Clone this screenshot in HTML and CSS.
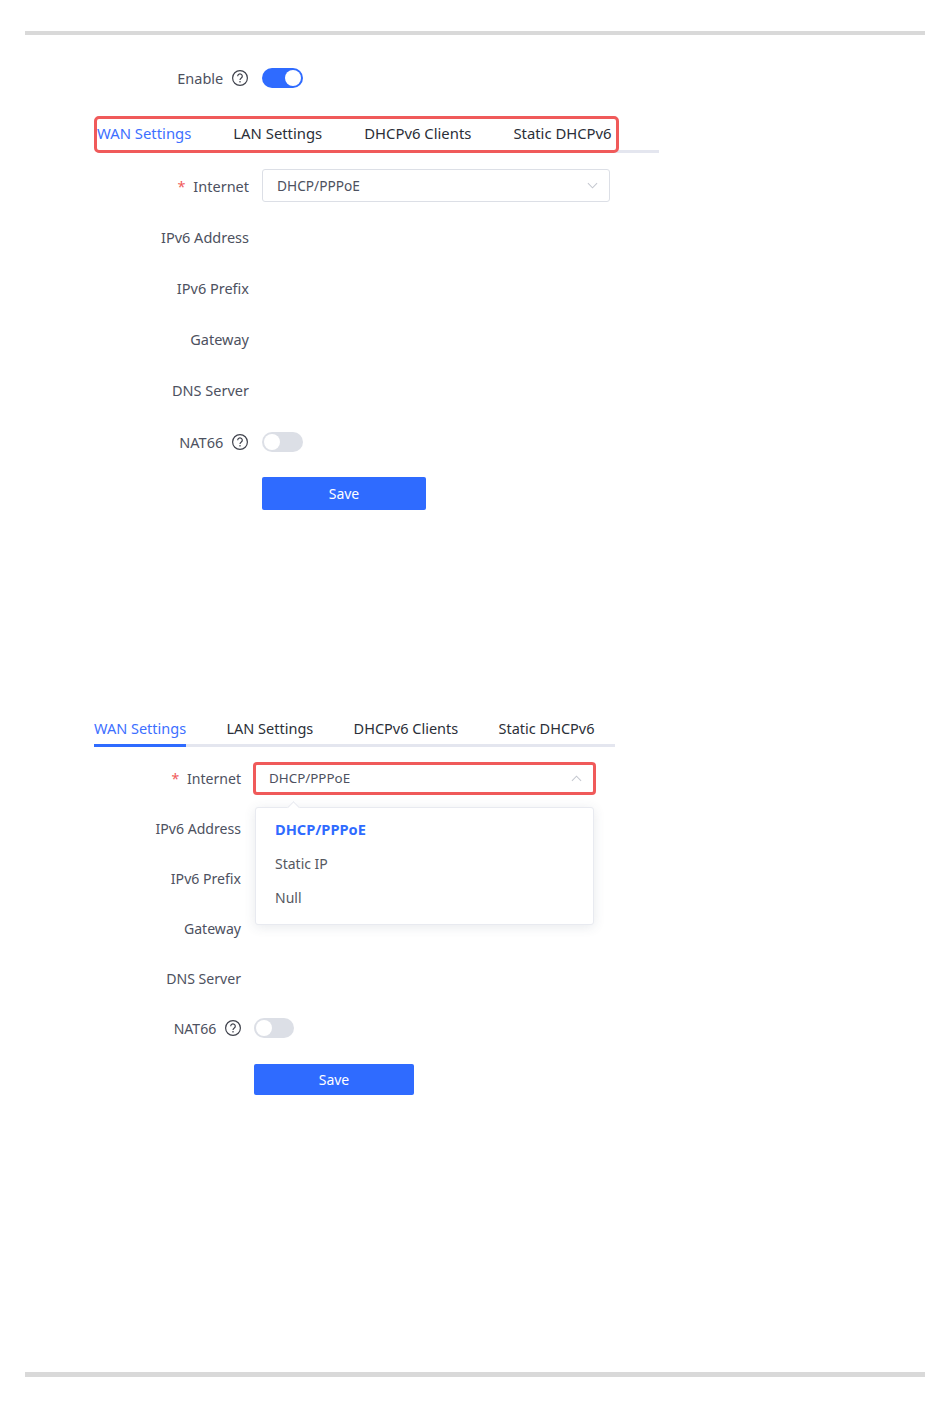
FILE: index.html
```html
<!DOCTYPE html>
<html lang="en">
<head>
<meta charset="utf-8">
<title>IPv6 Settings</title>
<link rel="stylesheet" href="styles.css">
</head>
<body>
<div class="rule rule-top"></div>

<section class="panel panel-a">
  <div class="row enable-row">
    <div class="label">Enable <svg class="help" viewBox="0 0 16 16"><circle cx="8" cy="8" r="7.4"/><path d="M5.7 6.2a2.3 2.3 0 1 1 3.6 1.9c-.9.6-1.3 1.1-1.3 2"/><path d="M8 11.1v1.3"/></svg></div>
    <div class="switch on"><span class="knob"></span></div>
  </div>
  <div class="tabs-wrap">
    <nav class="tabs">
      <span class="tab active">WAN Settings</span>
      <span class="tab">LAN Settings</span>
      <span class="tab">DHCPv6 Clients</span>
      <span class="tab">Static DHCPv6</span>
    </nav>
    <div class="mark mark-tabs"></div>
  </div>
  <div class="row">
    <div class="label"><span class="req">*</span> Internet</div>
    <div class="select"><span>DHCP/PPPoE</span><svg class="chev" viewBox="0 0 12 7"><path d="M1 1l5 5 5-5"/></svg></div>
  </div>
  <div class="row"><div class="label">IPv6 Address</div></div>
  <div class="row"><div class="label">IPv6 Prefix</div></div>
  <div class="row"><div class="label">Gateway</div></div>
  <div class="row"><div class="label">DNS Server</div></div>
  <div class="row">
    <div class="label">NAT66 <svg class="help" viewBox="0 0 16 16"><circle cx="8" cy="8" r="7.4"/><path d="M5.7 6.2a2.3 2.3 0 1 1 3.6 1.9c-.9.6-1.3 1.1-1.3 2"/><path d="M8 11.1v1.3"/></svg></div>
    <div class="switch"><span class="knob"></span></div>
  </div>
  <div class="row save-row"><div class="label"></div><button class="save">Save</button></div>
</section>

<section class="panel panel-b">
  <nav class="tabs">
    <span class="tab active">WAN Settings</span>
    <span class="tab">LAN Settings</span>
    <span class="tab">DHCPv6 Clients</span>
    <span class="tab">Static DHCPv6</span>
  </nav>
  <div class="fields">
    <div class="row">
      <div class="label"><span class="req">*</span> Internet</div>
      <div class="select open"><span>DHCP/PPPoE</span><svg class="chev" viewBox="0 0 12 7"><path d="M1 6l5-5 5 5"/></svg></div>
    </div>
    <div class="row"><div class="label">IPv6 Address</div></div>
    <div class="row"><div class="label">IPv6 Prefix</div></div>
    <div class="row"><div class="label">Gateway</div></div>
    <div class="row"><div class="label">DNS Server</div></div>
    <div class="row">
      <div class="label">NAT66 <svg class="help" viewBox="0 0 16 16"><circle cx="8" cy="8" r="7.4"/><path d="M5.7 6.2a2.3 2.3 0 1 1 3.6 1.9c-.9.6-1.3 1.1-1.3 2"/><path d="M8 11.1v1.3"/></svg></div>
      <div class="switch"><span class="knob"></span></div>
    </div>
    <div class="row save-row"><div class="label"></div><button class="save">Save</button></div>
    <div class="menu">
      <span class="menu-arrow"></span>
      <div class="option selected">DHCP/PPPoE</div>
      <div class="option">Static IP</div>
      <div class="option">Null</div>
    </div>
  </div>
</section>

<div class="rule rule-bottom"></div>
</body>
</html>
```
FILE: styles.css
```css
* { box-sizing: border-box; }
html, body { margin: 0; background: #fff; }
body {
  height: 1408px;
  padding-top: 31px;
  font-family: "Noto Sans", "Liberation Sans", sans-serif;
  font-size: 14px;
  color: #3a3f4a;
  overflow: hidden;
}
.rule { height: 4px; margin: 0 25px; background: #d9d9d9; }
.rule-bottom { height: 5px; margin-top: 269px; }

.panel { position: relative; }
.panel-a { width: 659px; margin-top: 23px; font-size: 14.5px; }
.panel-b { width: 615px; margin-top: 193px; font-size: 14.1px; }

.row { display: flex; align-items: center; }
.label {
  display: flex;
  justify-content: flex-end;
  align-items: center;
  gap: 5px;
  flex: none;
  color: #4d5160;
  white-space: pre;
}
.req { color: #f05a5a; margin-right: -1px; }

.help { width: 16px; height: 16px; fill: none; stroke: #3f424c; stroke-width: 1.2; flex: none; }
.panel-a .help { margin-right: 1px; }

.switch {
  flex: none;
  display: flex;
  align-items: center;
  height: 20px;
  padding: 2px;
  border-radius: 10px;
  background: #dcdfe6;
}
.switch.on { background: #2f6bff; justify-content: flex-end; }
.knob { width: 16px; height: 16px; border-radius: 50%; background: #fff; }

.tabs { display: flex; color: #2b2f38; }
.tab { white-space: nowrap; }
.tab.active { color: #3d6fff; }

.select {
  display: flex;
  justify-content: space-between;
  align-items: center;
  flex: none;
  background: #fff;
  color: #4d5160;
}
.chev { width: 11px; height: 7px; fill: none; stroke: #c4c7cf; stroke-width: 1.1; }

.save {
  flex: none;
  border: 0;
  border-radius: 2px;
  background: #2f6bff;
  color: #fff;
  font: inherit;
  font-size: 14px;
  padding: 0;
}

/* first panel */
.panel-a .row { height: 51.2px; gap: 13px; }
.panel-a .label { width: 249px; }
.panel-a .enable-row { height: 40px; }
.panel-a .select { width: 348px; height: 33px; padding: 0 11px 0 14px; border: 1px solid #dcdfe6; border-radius: 3px; font-size: 13.7px; }
.panel-a .switch { width: 41px; }
.panel-a .save { width: 164px; height: 33px; margin-top: 2px; }
.panel-a .save-row .label { height: 1px; }

.tabs-wrap { position: relative; height: 44px; margin-top: 18px; margin-left: 97px; }
.panel-a .tabs { height: 37px; padding-top: 7px; gap: 42px; border-bottom: 3px solid #e4e6ef; line-height: 20px; }
.panel-a .tab { font-size: 14.85px; }
.mark {
  position: absolute;
  border: 3px solid #f05a5a;
  border-radius: 5px;
  pointer-events: none;
}
.mark-tabs { left: -3px; top: 0; width: 525px; height: 37px; }

/* second panel */
.panel-b .tabs { margin-left: 94px; height: 36px; gap: 40.3px; line-height: 20px; padding-top: 7px; border-bottom: 3px solid #e4e6ef; }
.panel-b .tab { font-size: 14.5px; }
.panel-b .tab.active { height: 29px; border-bottom: 3px solid #2f6bff; box-sizing: content-box; height: 26px; }
.fields { position: relative; margin-top: 6px; }
.panel-b .row { height: 50px; gap: 13px; }
.panel-b .label { width: 241px; }
.panel-b .select {
  width: 343px;
  height: 33px;
  margin-left: -1px;
  padding: 0 11px 0 13px;
  border: 3px solid #f05a5a;
  border-radius: 4px;
  font-size: 13.4px;
}
.panel-b .switch { width: 40px; }
.panel-b .save { width: 160px; height: 31px; margin-top: 2px; }
.panel-b .save-row .label { height: 1px; }

.menu {
  position: absolute;
  left: 255px;
  top: 54px;
  width: 339px;
  height: 118px;
  padding: 4px 0;
  background: #fff;
  border: 1px solid #e8eaf0;
  border-radius: 3px;
  box-shadow: 0 2px 12px rgba(60, 70, 100, .12);
}
.menu-arrow {
  position: absolute;
  left: 33px;
  top: -5px;
  width: 9px;
  height: 9px;
  background: #fff;
  border-left: 1px solid #e8eaf0;
  border-top: 1px solid #e8eaf0;
  transform: rotate(45deg);
}
.option { height: 34.5px; line-height: 34px; padding-left: 19px; color: #55585f; font-size: 14px; }
.option.selected { color: #2f6bff; font-weight: 700; font-size: 14.6px; }
```
